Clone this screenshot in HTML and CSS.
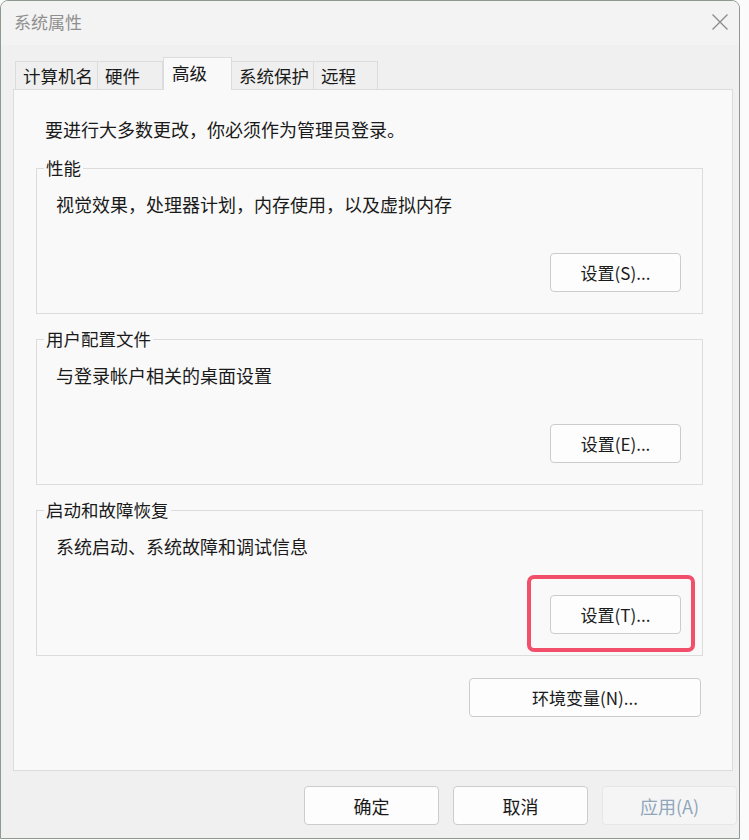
FILE: index.html
```html
<!DOCTYPE html>
<html lang="zh-CN">
<head>
    <meta charset="UTF-8">
    <meta name="viewport" content="width=device-width, initial-scale=1.0">
    <title>系统属性</title>
    <link rel="stylesheet" href="styles.css">
</head>
<body>
    <div class="window">
        <div class="titlebar">
            <span class="title">系统属性</span>
            <button class="close" aria-label="关闭">
                <svg width="18" height="18" viewBox="0 0 18 18">
                    <path d="M1.5 1.5 L16.5 16.5 M16.5 1.5 L1.5 16.5" stroke="#8a8a8a" stroke-width="1.3" fill="none"/>
                </svg>
            </button>
        </div>

        <div class="tabs">
            <div class="tab" style="width: 83px">计算机名</div>
            <div class="tab" style="width: 65px">硬件</div>
            <div class="tab active" style="width: 69px">高级</div>
            <div class="tab" style="width: 82px">系统保护</div>
            <div class="tab" style="width: 64px">远程</div>
        </div>

        <div class="panel">
            <p class="intro">要进行大多数更改，你必须作为管理员登录。</p>

            <div class="group">
                <div class="group-title">性能</div>
                <p class="group-desc">视觉效果，处理器计划，内存使用，以及虚拟内存</p>
                <button class="btn">设置(S)...</button>
            </div>

            <div class="group">
                <div class="group-title">用户配置文件</div>
                <p class="group-desc">与登录帐户相关的桌面设置</p>
                <button class="btn">设置(E)...</button>
            </div>

            <div class="group">
                <div class="group-title">启动和故障恢复</div>
                <p class="group-desc">系统启动、系统故障和调试信息</p>
                <button class="btn">设置(T)...</button>
                <div class="highlight"></div>
            </div>

            <div class="env-row">
                <button class="btn btn-wide">环境变量(N)...</button>
            </div>
        </div>

        <div class="footer">
            <button class="btn btn-footer">确定</button>
            <button class="btn btn-footer">取消</button>
            <button class="btn btn-footer" disabled>应用(A)</button>
        </div>
    </div>
</body>
</html>
```

FILE: styles.css
```css
:root {
    --window-bg: #f0f0f0;
    --title-bg: #f3f3f3;
    --panel-bg: #f9f9f9;
    --line: #dcdcdc;
    --text: #1a1a1a;
    --muted: #8f8f8f;
    --btn-border: #cccccc;
    --mark: #f24f6a;
}

* {
    box-sizing: border-box;
}

body {
    margin: 0;
    background: #fbfbfb;
    font-family: "Noto Sans CJK SC", "Noto Sans", sans-serif;
    font-size: 18px;
    color: var(--text);
}

.window {
    width: 740px;
    height: 839px;
    border: 1px solid #8e9a8f;
    border-radius: 8px 8px 0 0;
    background: var(--window-bg);
    display: flex;
    flex-direction: column;
    overflow: hidden;
}

/* Title bar */
.titlebar {
    height: 44px;
    background: var(--title-bg);
    display: flex;
    align-items: center;
    justify-content: space-between;
    padding: 0 8px 0 13px;
}

.title {
    color: var(--muted);
    font-size: 17px;
    line-height: 20px;
    margin-top: -2px;
}

.close {
    background: none;
    border: none;
    padding: 0;
    width: 22px;
    height: 22px;
    display: flex;
    align-items: center;
    justify-content: center;
    margin-top: -2px;
}

/* Tabs */
.tabs {
    display: flex;
    align-items: flex-end;
    padding-left: 14px;
    margin-top: 12px;
    height: 32px;
    position: relative;
    z-index: 1;
}

.tab {
    height: 28px;
    border: 1px solid var(--line);
    border-bottom: none;
    background: #efefef;
    padding: 0 7px;
    line-height: 28px;
    font-size: 17.5px;
    white-space: nowrap;
}

.tab + .tab {
    border-left: none;
}

.tab.active {
    height: 33px;
    margin-bottom: -1px;
    background: var(--panel-bg);
    border-left: 1px solid var(--line);
    padding: 0 8px;
    line-height: 30px;
}

.tab.active + .tab {
    border-left: none;
}

/* Panel */
.panel {
    margin-left: 12px;
    width: 720px;
    height: 682px;
    background: var(--panel-bg);
    border: 1px solid var(--line);
    display: flex;
    flex-direction: column;
}

.intro {
    margin: 29px 0 0 31px;
    line-height: 20px;
}

.group {
    position: relative;
    margin: 29px 0 0 22px;
    width: 667px;
    height: 146px;
    border: 1px solid var(--line);
    display: flex;
    flex-direction: column;
    align-items: flex-start;
}

.group + .group {
    margin-top: 25px;
}

.group-title {
    margin: -11px 0 0 7px;
    padding: 0 2px;
    line-height: 20px;
    font-size: 17.5px;
    background: var(--panel-bg);
}

.group-desc {
    margin: 16px 0 0 19px;
    line-height: 20px;
}

.group .btn {
    margin: auto 21px 21px 0;
    align-self: flex-end;
}

.highlight {
    position: absolute;
    left: 490px;
    top: 64px;
    width: 168px;
    height: 77px;
    border: 4px solid var(--mark);
    border-radius: 7px;
    pointer-events: none;
}

/* Buttons */
.btn {
    width: 131px;
    height: 39px;
    background: #fdfdfd;
    border: 1px solid var(--btn-border);
    border-radius: 4px;
    font-family: inherit;
    font-size: 17px;
    color: var(--text);
    padding: 0;
}

.btn-wide {
    width: 232px;
}

.env-row {
    display: flex;
    justify-content: flex-end;
    margin: 22px 31px 0 0;
}

.footer {
    display: flex;
    justify-content: flex-end;
    gap: 14px;
    padding: 15px 2px 0 0;
}

.btn-footer {
    width: 135px;
    font-size: 18px;
}

.btn-footer:disabled {
    background: #f5f5f5;
    border-color: #e6e6e6;
    color: #8fa6bb;
}
```
